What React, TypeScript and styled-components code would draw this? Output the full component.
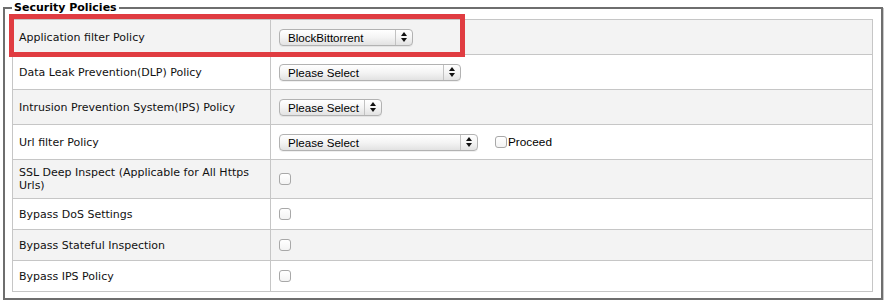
import React from "react";
import styled, { createGlobalStyle } from "styled-components";

const GlobalStyle = createGlobalStyle`
  html, body { margin: 0; padding: 0; background: #ffffff; }
  body { font-family: "DejaVu Sans", Verdana, sans-serif; }
`;

const Page = styled.div`
  position: relative;
  padding: 1px 4px 0 3px;
`;

const Fieldset = styled.fieldset`
  margin: 0;
  padding: 5px 8px 6px 7px;
  border: 2px solid #6e6e6e;
  box-shadow: 1px 1px 0 #c9c9c9;
  background: #ffffff;
  min-width: 0;
`;

const Legend = styled.legend`
  padding: 0 2px;
  font: bold 11px/13px "DejaVu Sans", Verdana, sans-serif;
  color: #000;
`;

const Table = styled.div`
  border: 1px solid #c6c6c6;
`;

const Row = styled.div<{ $h: number; $alt: boolean }>`
  display: grid;
  grid-template-columns: 258px 1fr;
  min-height: ${(p) => p.$h}px;
  background: ${(p) => (p.$alt ? "#f3f3f3" : "#ffffff")};
  & + & {
    border-top: 1px solid #c6c6c6;
  }
`;

const LabelCell = styled.div`
  display: flex;
  align-items: center;
  padding: 0 8px 0 6px;
  border-right: 1px solid #c6c6c6;
  font: 11px/13px "DejaVu Sans", Verdana, sans-serif;
  color: #111;
`;

const ValueCell = styled.div`
  display: flex;
  align-items: center;
  padding: 0 8px;
`;

const SelectBox = styled.div<{ $w: number }>`
  display: inline-flex;
  align-items: stretch;
  box-sizing: border-box;
  width: ${(p) => p.$w}px;
  height: 17px;
  border: 1px solid #b2b2b2;
  border-radius: 4px;
  background: linear-gradient(#ffffff, #f4f4f4 50%, #e2e2e2);
  box-shadow: 0 1px 0 rgba(0, 0, 0, 0.06);
  font: 11.6px/15px "Liberation Sans", Arial, sans-serif;
  color: #000;
`;

const SelectText = styled.span`
  flex: 1;
  padding-left: 8px;
  white-space: nowrap;
  overflow: hidden;
`;

const SelectArrows = styled.span`
  width: 16px;
  border-left: 1px solid #c2c2c2;
  display: flex;
  align-items: center;
  justify-content: center;
`;

const Check = styled.input.attrs({ type: "checkbox" })`
  appearance: none;
  -webkit-appearance: none;
  margin: 0;
  width: 12px;
  height: 12px;
  box-sizing: border-box;
  border: 1px solid #a8a8a8;
  border-radius: 3px;
  background: linear-gradient(#ffffff, #f3f3f3);
`;

const ProceedLabel = styled.label`
  display: inline-flex;
  align-items: center;
  margin-left: 17px;
  gap: 1px;
  font: 11.8px/15px "Liberation Sans", Arial, sans-serif;
  color: #000;
`;

const Highlight = styled.div`
  position: absolute;
  left: 9px;
  top: 14px;
  width: 456px;
  height: 43px;
  box-sizing: border-box;
  border: 5px solid #e03c41;
  pointer-events: none;
`;

const Arrows = () => (
  <svg width="6" height="10" viewBox="0 0 6 10">
    <polygon points="0,4 3,0 6,4" fill="#111" />
    <polygon points="0,6 6,6 3,10" fill="#111" />
  </svg>
);

const Select = ({ value, width }: { value: string; width: number }) => (
  <SelectBox $w={width}>
    <SelectText>{value}</SelectText>
    <SelectArrows>
      <Arrows />
    </SelectArrows>
  </SelectBox>
);

type RowData = {
  label: string;
  kind: "select" | "check";
  value?: string;
  width?: number;
  proceed?: boolean;
  h: number;
};

const rows: RowData[] = [
  { label: "Application filter Policy", kind: "select", value: "BlockBittorrent", width: 134, h: 34 },
  { label: "Data Leak Prevention(DLP) Policy", kind: "select", value: "Please Select", width: 182, h: 34 },
  { label: "Intrusion Prevention System(IPS) Policy", kind: "select", value: "Please Select", width: 103, h: 34 },
  { label: "Url filter Policy", kind: "select", value: "Please Select", width: 199, proceed: true, h: 34 },
  { label: "SSL Deep Inspect (Applicable for All Https Urls)", kind: "check", h: 38 },
  { label: "Bypass DoS Settings", kind: "check", h: 30 },
  { label: "Bypass Stateful Inspection", kind: "check", h: 30 },
  { label: "Bypass IPS Policy", kind: "check", h: 30 },
];

export default function App() {
  return (
    <Page>
      <GlobalStyle />
      <Fieldset>
        <Legend>Security Policies</Legend>
        <Table>
          {rows.map((r, i) => (
            <Row key={r.label} $h={r.h} $alt={i % 2 === 0}>
              <LabelCell>{r.label}</LabelCell>
              <ValueCell>
                {r.kind === "select" ? (
                  <>
                    <Select value={r.value!} width={r.width!} />
                    {r.proceed && (
                      <ProceedLabel>
                        <Check />
                        Proceed
                      </ProceedLabel>
                    )}
                  </>
                ) : (
                  <Check />
                )}
              </ValueCell>
            </Row>
          ))}
        </Table>
      </Fieldset>
      <Highlight />
    </Page>
  );
}
